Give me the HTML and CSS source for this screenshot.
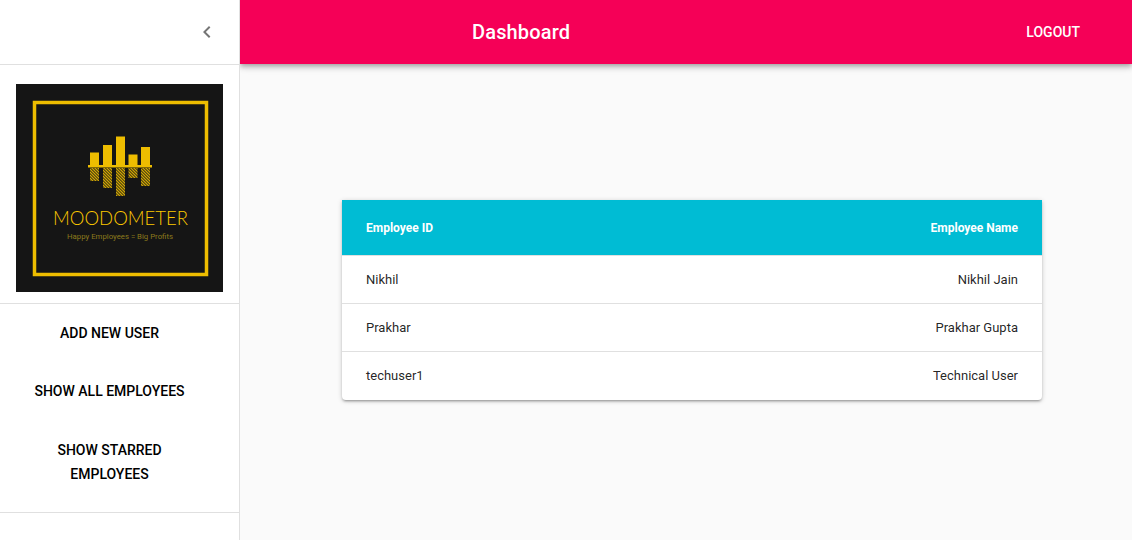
FILE: index.html
```html
<!DOCTYPE html>
<html lang="en">
<head>
    <meta charset="UTF-8">
    <meta name="viewport" content="width=device-width, initial-scale=1.0">
    <title>Dashboard</title>
    <link rel="stylesheet" href="styles.css">
</head>
<body>
    <aside class="sidebar">
        <div class="sidebar-top">
            <button class="icon-button" aria-label="Collapse">
                <svg viewBox="0 0 24 24" width="24" height="24"><path d="M15.41 7.41L14 6l-6 6 6 6 1.41-1.41L10.83 12z"/></svg>
            </button>
        </div>
        <div class="logo-wrap">
            <svg class="logo" viewBox="0 0 207 208" width="207" height="208">
                <defs>
                    <pattern id="hatch" width="2.12" height="2.12" patternUnits="userSpaceOnUse" patternTransform="rotate(-45)">
                        <rect width="2.12" height="2.12" fill="#151515"/>
                        <rect width="1.2" height="2.12" fill="#eebd00"/>
                    </pattern>
                </defs>
                <rect width="207" height="208" fill="#151515"/>
                <rect x="18.5" y="18.500" width="172" height="172" fill="none" stroke="#eebd00" stroke-width="3.5"/>
                <rect x="74" y="68.500" width="9" height="12.500" fill="#eebd00"/>
                <rect x="87" y="61" width="9" height="20" fill="#eebd00"/>
                <rect x="100" y="52.500" width="9" height="28.500" fill="#eebd00"/>
                <rect x="112.500" y="70.500" width="9" height="10.500" fill="#eebd00"/>
                <rect x="125" y="63" width="9" height="18" fill="#eebd00"/>
                <rect x="72" y="81" width="64" height="2.500" fill="#eebd00"/>
                <rect x="74" y="84" width="9" height="13" fill="url(#hatch)"/>
                <rect x="87" y="84" width="9" height="20" fill="url(#hatch)"/>
                <rect x="100" y="84" width="9" height="28" fill="url(#hatch)"/>
                <rect x="112.500" y="84" width="9" height="10" fill="url(#hatch)"/>
                <rect x="125" y="84" width="9" height="18" fill="url(#hatch)"/>
                <text class="logo-name" x="37" y="141" textLength="135" lengthAdjust="spacingAndGlyphs">MOODOMETER</text>
                <text class="logo-tag" x="51" y="155" textLength="106" lengthAdjust="spacingAndGlyphs">Happy Employees = Big Profits</text>
            </svg>
        </div>
        <nav class="side-menu">
            <button class="menu-button">Add New User</button>
            <button class="menu-button">Show All Employees</button>
            <button class="menu-button">Show Starred Employees</button>
        </nav>
    </aside>

    <div class="page">
        <header class="app-bar">
            <h1 class="app-title">Dashboard</h1>
            <button class="logout">Logout</button>
        </header>

        <main class="main-content">
            <table class="employee-table">
                <thead>
                    <tr>
                        <th>Employee ID</th>
                        <th class="right">Employee Name</th>
                    </tr>
                </thead>
                <tbody>
                    <tr>
                        <td>Nikhil</td>
                        <td class="right">Nikhil Jain</td>
                    </tr>
                    <tr>
                        <td>Prakhar</td>
                        <td class="right">Prakhar Gupta</td>
                    </tr>
                    <tr>
                        <td>techuser1</td>
                        <td class="right">Technical User</td>
                    </tr>
                </tbody>
            </table>
        </main>
    </div>
</body>
</html>
```

FILE: styles.css
```css
* {
    margin: 0;
    padding: 0;
    box-sizing: border-box;
}

html, body {
    height: 100%;
    overflow: hidden;
}

body {
    display: flex;
    font-family: Roboto, "Liberation Sans", sans-serif;
    background: #fafafa;
    color: rgba(0, 0, 0, 0.87);
}

button {
    font-family: inherit;
    background: none;
    border: none;
    cursor: pointer;
}

/* sidebar */
.sidebar {
    width: 240px;
    flex-shrink: 0;
    background: #fff;
    border-right: 1px solid #e0e0e0;
    position: relative;
    z-index: 2;
}

.sidebar-top {
    height: 65px;
    display: flex;
    align-items: center;
    justify-content: flex-end;
    padding: 0 8px 1px;
    border-bottom: 1px solid #e0e0e0;
}

.icon-button {
    width: 48px;
    height: 48px;
    display: flex;
    align-items: center;
    justify-content: center;
    fill: rgba(0, 0, 0, 0.54);
}

.logo-wrap {
    height: 239px;
    padding: 19px 0 0 16px;
    border-bottom: 1px solid #e0e0e0;
}

.logo {
    display: block;
}

.logo-name {
    font-family: Lato, sans-serif;
    font-weight: 300;
    font-size: 20px;
    fill: #fcc800;
}

.logo-tag {
    font-family: Roboto, sans-serif;
    font-size: 7px;
    fill: #8c7a1c;
}

.side-menu {
    display: flex;
    flex-direction: column;
    gap: 16px;
    padding: 8px 36px 17px 16px;
    border-bottom: 1px solid #e0e0e0;
}

.menu-button {
    padding: 9px 8px;
    font-size: 14px;
    font-weight: 500;
    line-height: 24px;
    text-transform: uppercase;
    color: #000;
    text-align: center;
}

.menu-button:last-child {
    margin-top: 1px;
}

/* header + content */
.page {
    flex: 1;
    min-width: 0;
}

.app-bar {
    height: 64px;
    display: flex;
    align-items: center;
    justify-content: space-between;
    padding: 0 44px 0 232px;
    background: #f50057;
    color: white;
    box-shadow: 0 2px 4px -1px rgba(0, 0, 0, 0.2), 0 4px 5px 0 rgba(0, 0, 0, 0.14), 0 1px 10px 0 rgba(0, 0, 0, 0.12);
}

.app-title {
    font-size: 20px;
    font-weight: 500;
    line-height: 1.6;
    letter-spacing: 0.0075em;
}

.logout {
    padding: 6px 8px;
    font-size: 14px;
    font-weight: 500;
    line-height: 24.5px;
    text-transform: uppercase;
    color: white;
}

.main-content {
    padding: 136px 90px 0 102px;
}

.employee-table {
    width: 700px;
    background: #fff;
    border-collapse: separate;
    border-spacing: 0;
    border-radius: 0 0 4px 4px;
    overflow: hidden;
    box-shadow: 0 1px 5px 0 rgba(0, 0, 0, 0.2), 0 2px 2px 0 rgba(0, 0, 0, 0.14), 0 3px 1px -2px rgba(0, 0, 0, 0.12);
}

.employee-table th,
.employee-table td {
    padding: 0 24px;
    text-align: left;
    border-bottom: 1px solid #e0e0e0;
}

.employee-table th {
    height: 56px;
    background: #00bcd4;
    color: white;
    font-size: 12px;
    font-weight: 700;
}

.employee-table td {
    height: 48px;
    font-size: 13px;
}

.employee-table tr:last-child td {
    border-bottom-color: transparent;
}

.employee-table .right {
    text-align: right;
}
```
